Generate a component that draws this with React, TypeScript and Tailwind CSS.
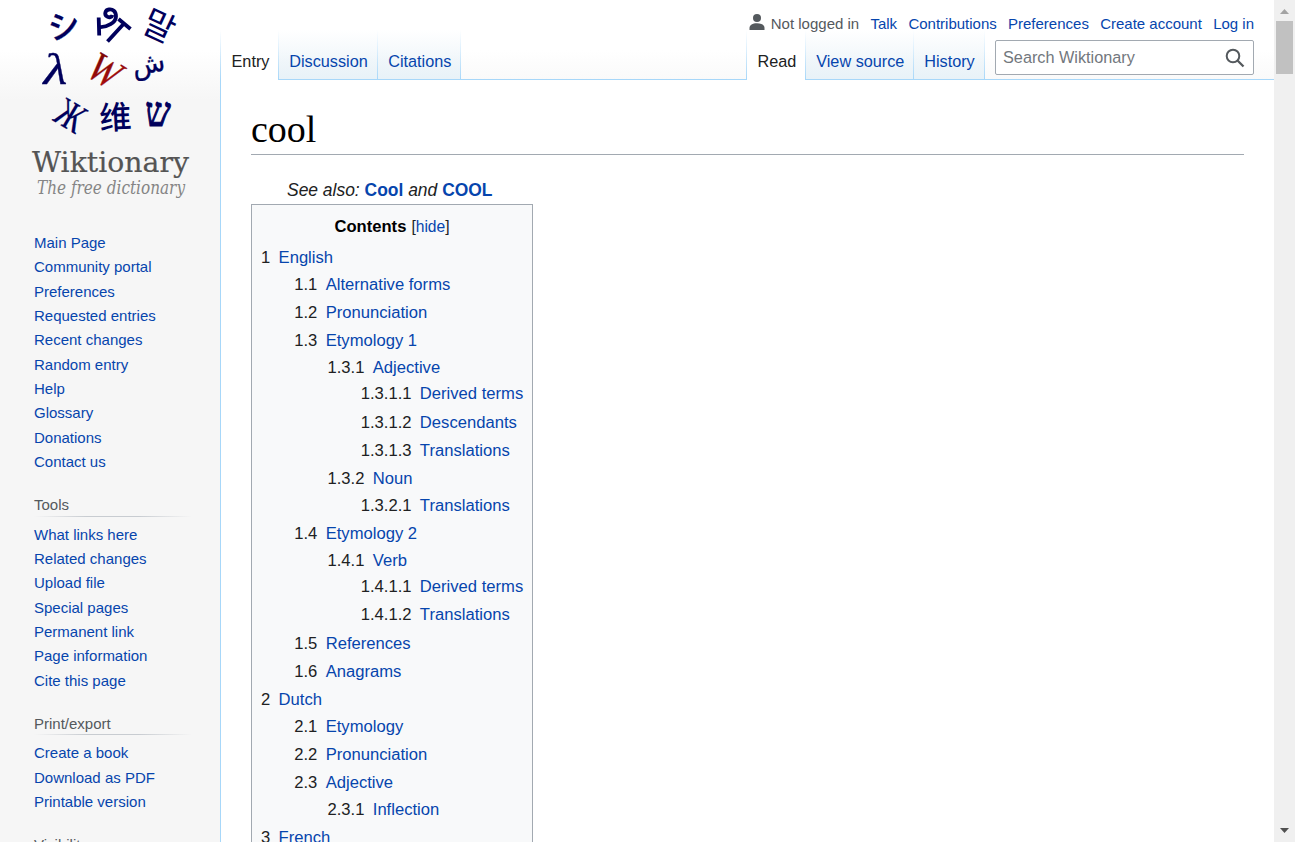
type Entry = { title: string; children?: Entry[] };

const toc: Entry[] = [
  {
    title: 'English',
    children: [
      { title: 'Alternative forms' },
      { title: 'Pronunciation' },
      {
        title: 'Etymology 1',
        children: [
          {
            title: 'Adjective',
            children: [{ title: 'Derived terms' }, { title: 'Descendants' }, { title: 'Translations' }],
          },
          { title: 'Noun', children: [{ title: 'Translations' }] },
        ],
      },
      {
        title: 'Etymology 2',
        children: [{ title: 'Verb', children: [{ title: 'Derived terms' }, { title: 'Translations' }] }],
      },
      { title: 'References' },
      { title: 'Anagrams' },
    ],
  },
  {
    title: 'Dutch',
    children: [
      { title: 'Etymology' },
      { title: 'Pronunciation' },
      { title: 'Adjective', children: [{ title: 'Inflection' }] },
    ],
  },
  { title: 'French' },
];

const mainLinks = [
  'Main Page',
  'Community portal',
  'Preferences',
  'Requested entries',
  'Recent changes',
  'Random entry',
  'Help',
  'Glossary',
  'Donations',
  'Contact us',
];

const portals = [
  {
    title: 'Tools',
    links: [
      'What links here',
      'Related changes',
      'Upload file',
      'Special pages',
      'Permanent link',
      'Page information',
      'Cite this page',
    ],
  },
  { title: 'Print/export', links: ['Create a book', 'Download as PDF', 'Printable version'] },
  { title: 'Visibility', links: [] },
];

function TocList({ items, prefix = '' }: { items: Entry[]; prefix?: string }) {
  return (
    <ul className={prefix ? 'ml-[2em]' : ''}>
      {items.map((item, i) => {
        const number = `${prefix}${i + 1}`;
        return (
          <li key={number} className="mb-[0.1em]">
            <a href="#" className="flex">
              <span className="pr-[0.5em] text-[#202122]">{number}</span>
              <span className="text-[#0645ad]">{item.title}</span>
            </a>
            {item.children && <TocList items={item.children} prefix={`${number}.`} />}
          </li>
        );
      })}
    </ul>
  );
}

function Logo() {
  return (
    <svg width="200" height="200" viewBox="0 0 200 200" className="ml-[10px] block shrink-0">
      <defs>
        <linearGradient id="red" x1="0" y1="0" x2="1" y2="1">
          <stop offset="0" stopColor="#6d0505" />
          <stop offset="1" stopColor="#c01010" />
        </linearGradient>
      </defs>
      <g fill="#00005c" stroke="#00005c" strokeWidth="0.3" textAnchor="middle">
        <text fontSize="32" fontWeight="500" fontFamily="'Noto Sans CJK JP', sans-serif" transform="translate(56 37.500) rotate(-10)">シ</text>
        <g fill="none" strokeWidth="3.8">
          <path d="M88.700 17.500L89.200 35.500M89.500 27C97 27.500 106 22.500 106 16.500C106 11 102.500 9 99 9.500C95 10 94 14.500 97 16.500C99 18 102 17 102.500 15" />
          <path d="M97.500 41.500L114 23.500M108.500 19L120.500 29" />
        </g>
        <text stroke="none" fontSize="34" fontFamily="'Noto Sans CJK KR', sans-serif" transform="translate(144 37) rotate(25)">말</text>
        <text fontSize="44" fontStyle="italic" fontFamily="'Liberation Serif', serif" transform="translate(45.500 84) scale(1.25 1)">λ</text>
        <text fill="url(#red)" stroke="#8c0808" fontSize="42" fontStyle="italic" fontFamily="'Liberation Serif', serif" transform="translate(87.500 82.500) rotate(31) scale(.88 1)">W</text>
        <text fontSize="27" fontFamily="'DejaVu Sans', sans-serif" transform="translate(140 73) rotate(-10)">ش</text>
        <text fontSize="41" fontFamily="'Liberation Serif', serif" transform="translate(53.500 127) rotate(31) scale(.75 1)">Ж</text>
        <text stroke="none" fontSize="32" fontWeight="500" fontFamily="'Noto Sans CJK SC', sans-serif" transform="translate(106 129) rotate(-3)">维</text>
        <text fontSize="41" fontFamily="'Liberation Serif', serif" transform="translate(148 126) scale(.88 1)" strokeWidth="1">ש</text>
      </g>
      <text x="22" y="172" fontSize="28.500" fill="#545454" stroke="#545454" strokeWidth="0.2" fontFamily="'DejaVu Serif', serif" textLength="157" lengthAdjust="spacingAndGlyphs">Wiktionary</text>
      <text x="27" y="194" fontSize="19" fill="#858585" fontStyle="italic" fontFamily="'DejaVu Serif', serif" textLength="148" lengthAdjust="spacingAndGlyphs">The free dictionary</text>
    </svg>
  );
}

function SideLinks({ links }: { links: string[] }) {
  return (
    <ul>
      {links.map((link) => (
        <li key={link} className="py-[3.75px] leading-[16.875px] text-[#0645ad]">
          <a href="#">{link}</a>
        </li>
      ))}
    </ul>
  );
}

function Sidebar() {
  return (
    <aside className="flex w-[220px] shrink-0 flex-col overflow-hidden bg-[#f6f6f6] bg-[linear-gradient(#fff_50px,#f6f6f6_100px)] text-[15px]">
      <Logo />
      <nav className="ml-[34px] shrink-0 pt-[31px]">
        <SideLinks links={mainLinks} />
      </nav>
      {portals.map((portal) => (
        <nav key={portal.title} className="ml-[34px] w-[158px] shrink-0 pt-[18px]">
          <h3 className="h-[23px] pt-[3.4px] leading-[18px] text-[#54595d]">{portal.title}</h3>
          <div className="mb-[6.1px] h-px bg-[linear-gradient(to_right,rgba(200,204,209,0),#c8ccd1_33%,#c8ccd1_66%,rgba(200,204,209,0))]" />
          <SideLinks links={portal.links} />
        </nav>
      ))}
    </aside>
  );
}

function Edge() {
  return <span className="w-px shrink-0 bg-[linear-gradient(rgba(167,215,249,0),#a7d7f9)]" />;
}

function Tab({ label, width, selected = false }: { label: string; width: string; selected?: boolean }) {
  return (
    <li className="flex h-[50px]">
      <a
        href="#"
        className={`flex h-full pt-[21px] leading-[20px] whitespace-nowrap ${width} ${
          selected
            ? 'bg-[linear-gradient(rgba(255,255,255,0),#fff_40%)] pl-[10.5px] text-[#202122]'
            : 'border-b border-[#a7d7f9] bg-[linear-gradient(rgba(255,255,255,0),#e8f2f8)] pl-[10.2px] text-[#0645ad]'
        }`}
      >
        {label}
      </a>
      <Edge />
    </li>
  );
}

function Header() {
  return (
    <header className="flex h-[80px] shrink-0 items-end bg-[linear-gradient(#fff_50px,#f6f6f6_100px)] text-[16.25px]">
      <ul className="flex">
        <li className="flex">
          <Edge />
        </li>
        <Tab label="Entry" width="w-[57px]" selected />
        <Tab label="Discussion" width="w-[98px]" />
        <Tab label="Citations" width="w-[82px]" />
      </ul>
      <div className="h-[50px] flex-1 border-b border-[#a7d7f9]" />
      <div className="flex h-[80px] w-[528px] flex-col">
        <div className="flex h-[30px] justify-end gap-[11.25px] pt-[15px] pr-[20px] text-[15px] leading-[18px] whitespace-nowrap text-[#0645ad]">
          <span className="flex text-[#54595d]">
            <svg width="16" height="17" viewBox="0 0 16 17" className="-mt-[2px] mr-[6px]" fill="#54595d">
              <circle cx="8" cy="5" r="4" />
              <path d="M.5 17v-2C.5 12 3.500 10.300 8 10.300s7.500 1.700 7.500 4.700v2z" />
            </svg>
            Not logged in
          </span>
          <a href="#">Talk</a>
          <a href="#">Contributions</a>
          <a href="#">Preferences</a>
          <a href="#">Create account</a>
          <a href="#">Log in</a>
        </div>
        <div className="flex h-[50px]">
          <ul className="flex">
            <li className="flex">
              <Edge />
            </li>
            <Tab label="Read" width="w-[58px]" selected />
            <Tab label="View source" width="w-[107px]" />
            <Tab label="History" width="w-[70px]" />
          </ul>
          <div className="flex flex-1 items-start border-b border-[#a7d7f9] pt-[10px] pr-[20px] pl-[10px]">
            <div className="flex h-[35px] w-[259px] items-center justify-between rounded-[2px] border border-[#a2a9b1] bg-white pr-[8px] pl-[7px] text-[#72777d]">
              <span>Search Wiktionary</span>
              <svg width="20" height="20" viewBox="0 0 20 20" fill="none" stroke="#54595d" strokeWidth="2">
                <circle cx="8" cy="8" r="6.300" />
                <path d="M12.500 12.500l6 6" strokeWidth="2.300" />
              </svg>
            </div>
          </div>
        </div>
      </div>
    </header>
  );
}

export default function App() {
  return (
    <div className="flex h-[842px] w-[1295px] overflow-hidden bg-white font-['Liberation_Sans',Arial,sans-serif]">
      <Sidebar />
      <div className="flex min-w-0 flex-1 flex-col">
        <Header />
        <main className="min-h-0 flex-1 overflow-hidden border-l border-[#a7d7f9] bg-white px-[30px] text-[17.5px] text-[#202122]">
          <h1 className="h-[75px] border-b border-[#a2a9b1] pt-[26px] font-['Liberation_Serif',serif] text-[38px] leading-[46px] text-black">
            cool
          </h1>
          <p className="h-[49px] pt-[21px] pl-[36px] text-[17.45px] leading-[28px] italic">
            See also:{' '}
            <a href="#" className="font-bold text-[#0645ad] not-italic">Cool</a> and{' '}
            <a href="#" className="font-bold text-[#0645ad] not-italic">COOL</a>
          </p>
          <section className="w-[282px] border border-[#a2a9b1] bg-[#f8f9fa] px-[9px] pt-[9px] text-[16.625px] leading-[26.6px] whitespace-nowrap">
            <div className="flex items-center justify-center gap-[5px]">
              <h2 className="font-bold text-black">Contents</h2>
              <span className="text-[15.6px]">
                [<a href="#" className="text-[#0645ad]">hide</a>]
              </span>
            </div>
            <div className="pt-[4.500px]">
              <TocList items={toc} />
            </div>
          </section>
        </main>
      </div>
      <div className="flex w-[21px] shrink-0 flex-col items-center justify-between bg-[#f0f0f0]">
        <div className="flex flex-col items-center">
          <svg width="9" height="21" viewBox="0 0 9 21" fill="#a3a3a3">
            <path d="M0 14L4.500 9L9 14z" />
          </svg>
          <div className="h-[53px] w-[17px] bg-[#c1c1c1]" />
        </div>
        <svg width="9" height="21" viewBox="0 0 9 21" fill="#505050">
          <path d="M0 7L4.500 12L9 7z" />
        </svg>
      </div>
    </div>
  );
}
